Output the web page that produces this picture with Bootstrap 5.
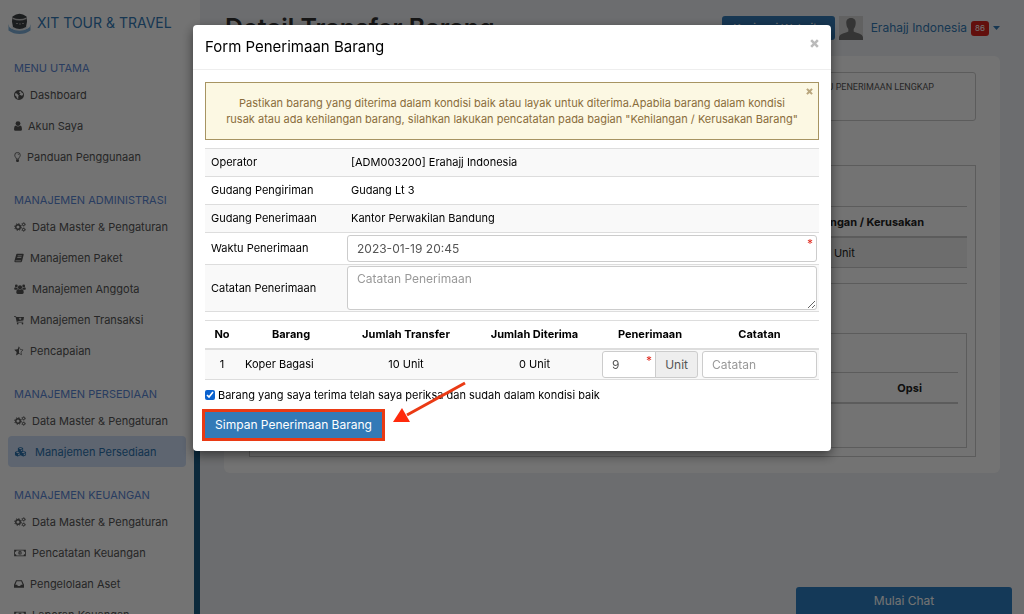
<!DOCTYPE html>
<html lang="id">
<head>
<meta charset="utf-8">
<meta name="viewport" content="width=device-width, initial-scale=1">
<title>Detail Transfer Barang</title>
<link href="https://cdn.jsdelivr.net/npm/bootstrap@5.3.0/dist/css/bootstrap.min.css" rel="stylesheet">
<style>
  body { font-family: Inter, "Open Sans", sans-serif; font-size: 11px; line-height: 16px; color: #333; background: #f0f2f5; height: 100vh; overflow: hidden; }
  a { text-decoration: none; }
  .side { width: 200px; background: #fff; }
  .side-menu { padding: 0 14px; }
  .side-track { width: 6px; padding-top: 200px; }
  .side-thumb { background: #1b5c84; }
  .brand { gap: 6px; height: 46px; margin: 0 -6px 12px; color: #337ab7; font-size: 14px; }
  .side h2 { font-size: 11px; line-height: 21px; margin: 0; color: #5b87d6; font-weight: 400; white-space: nowrap; }
  .side ul { margin: 0 -6px 18px; }
  .side .item { height: 31px; padding: 0 6px; gap: 6px; color: #555; white-space: nowrap; border-radius: 4px; }
  .side .item.active { background: #d0dff8; color: #2a72ae; gap: 8px; }
  .side svg.ic { height: 10px; fill: currentColor; flex: none; }
  .main-top { padding: 16px 24px 0 25px; height: 56px; }
  .main-top h1 { font-size: 25px; line-height: 24px; font-weight: 600; margin: 0; color: #333; }
  .btn-page { background: #337ab7; color: #fff; font-size: 11px; line-height: 14px; padding: 5px 8px; border: 0; border-radius: 3px; width: 113px; white-space: nowrap; }
  .user { font-size: 12px; color: #337ab7; }
  .count { background: #d9231c; color: #fff; font-size: 8px; line-height: 15px; padding: 0 4px; border-radius: 3px; }
  .panel-main { background: #fff; margin: 0 24px; padding: 16px 24px 16px 25px; border-radius: 6px; }
  .info-box { border: 1px solid #ccc; border-radius: 3px; height: 49px; padding: 6px 41px; font-family: Roboto, sans-serif; font-size: 9px; text-align: right; color: #555; }
  .outer-box { border: 1px solid #ccc; margin-top: 44px; padding: 40px 8px 8px; }
  .outer-box table { margin: 0 0 15px; color: #222; }
  .outer-box th, .outer-box td { font-size: 11px; line-height: 16px; padding: 7px 6px 6px; text-align: center; border-color: #ccc; white-space: nowrap; }
  .outer-box thead th { border-top: 1px solid #ccc; border-bottom: 2px solid #ccc; }
  .outer-box tbody td { background: #f1f1f1; box-shadow: none; }
  .end-line { border-top: 1px solid #ccc; margin-bottom: 49px; }
  .inner-box { border: 1px solid #ccc; padding: 38px 8px 28px; }
  .chat { position: fixed; right: 12px; bottom: 0; width: 216px; height: 27px; background: #2d7fc3; color: #fff; border: 0; border-radius: 3px 3px 0 0; font-size: 12px; }
  .modal-backdrop.show { opacity: .55; }
  .modal { --bs-modal-width: 638px; }
  .modal-dialog { margin: 25px auto; color: #000; }
  .modal-content { border: 0; border-radius: 4px; color: #000; box-shadow: 0 4px 12px rgba(0,0,0,.5); }
  .modal-header { padding: 0 12px; height: 45px; border-bottom: 1px solid #eee; }
  .modal-title { font-size: 15px; line-height: 20px; font-weight: 400; }
  .modal-body { padding: 12px 12px 13px; }
  .x { border: 0; background: none; padding: 0; line-height: 0; }
  .warn { border: 1px solid #a79462; background: #fcf8e3; color: #8a6d3b; margin: 0 0 8px; padding: 12px 12px; border-radius: 0; text-align: center; line-height: 16px; height: 58px; }
  .warn .x { position: absolute; right: 5px; top: 5px; }
  .grid-form { margin-bottom: 8px; --bs-table-striped-bg: #f9f9f9; --bs-table-striped-color: #000; border-bottom: 1px solid #ddd; }
  .grid-form > tbody > tr > * { font-size: 11px; line-height: 16px; padding: 5px 6px 6px; border-width: 1px 0 0; border-color: #ddd; color: #000; font-weight: 400; vertical-align: middle; }
  .grid-form > tbody > tr > .field { padding: 1px 2px; position: relative; }
  .grid-form > tbody > tr > .field-roomy { padding: 2px; }
  .grid-form > thead th { font-size: 11px; line-height: 16px; padding: 5px 6px 6px; border-top: 1px solid #ddd; border-bottom: 2px solid #ddd; color: #000; text-align: center; font-weight: 700; }
  .items-table { margin-bottom: 7px; }
  .field .form-control, .field .input-group-text { font-size: 12px; line-height: 16px; height: 27px; padding: 4px 9px; border-color: #ccc; border-radius: 3px; color: #555; }
  .field .form-control::placeholder { color: #999; }
  .field textarea.form-control { height: 44px; display: block; resize: vertical; }
  .field .input-group-text { background: #eee; border-radius: 0 3px 3px 0; }
  .field .input-group .form-control { border-radius: 3px 0 0 3px; }
  .req { position: absolute; right: 6px; top: 4px; color: #e02b20; font-size: 12px; line-height: 14px; z-index: 6; }
  .req-in { right: 48px; }
  .agree { gap: 3px; margin-bottom: 9px; }
  .agree input { width: 10px; height: 10px; margin: 0; accent-color: #0b62cf; }
  .save { background: #337ab7; color: #fff; font-size: 12px; line-height: 16px; border: 0; border-radius: 0; padding: 5px 9px; width: 177px; height: 26px; outline: 3px solid #ea3a14; white-space: nowrap; }
  .save:hover { background: #286090; color: #fff; }
  .arrow { position: absolute; left: 188px; bottom: 13px; z-index: 2; }
</style>
</head>
<body class="d-flex">
<svg class="d-none">
  <symbol id="globe" viewBox="0 0 12 12"><path fill-rule="evenodd" d="M6 0a6 6 0 1 0 0 12A6 6 0 0 0 6 0M7 1.3l1.500.6.7 1.300 1.300.4.3 2.400-1.500 1-1.200-.8L6.500 5.600 7.800 4 6.200 3.200zM1.500 4l2 .2 2.300 2.600-.8 1.400.2 2.500L3.500 10 2.900 7.700 1.200 6.200z"/></symbol>
  <symbol id="user" viewBox="0 0 10 12"><circle cx="5" cy="3" r="3"/><path d="M2.200 5.500Q0 6 0 10q0 2 1.800 2h6.400Q10 12 10 10 10 6 7.800 5.500 5 7.800 2.200 5.500z"/></symbol>
  <symbol id="bulb" viewBox="0 0 8 12"><path fill="none" stroke="currentColor" d="M2.700 8.500C2.700 6.800.7 6 .7 3.800a3.300 3.300 0 0 1 6.600 0C7.300 6 5.300 6.800 5.300 8.500z"/><path d="M2.300 9h3.400v2L4.800 12H3.200l-.9-1z"/><path fill="none" stroke="currentColor" stroke-width=".7" d="M4 2.200q1.500 0 1.500 1.300"/></symbol>
  <symbol id="cogs" viewBox="0 0 14 12"><g fill="none" stroke="currentColor"><circle cx="4.600" cy="6" r="2.700" stroke-width="1.700"/><circle cx="4.600" cy="6" r="4" stroke-width="1.200" stroke-dasharray="1.570 1.570"/><circle cx="11.300" cy="2.900" r="1.400" stroke-width="1.200"/><circle cx="11.300" cy="9.100" r="1.400" stroke-width="1.200"/><circle cx="11.300" cy="2.900" r="2.200" stroke-width=".7" stroke-dasharray="1.150 1.150"/><circle cx="11.300" cy="9.100" r="2.200" stroke-width=".7" stroke-dasharray="1.150 1.150"/></g></symbol>
  <symbol id="book" viewBox="0 0 12 12"><path fill-rule="evenodd" d="M3.600 1h7.200q1 0 .8 1L9.600 10q-.3 1-1.200 1H1.800Q.3 11 .5 9.500L2.600 2q.3-1 1-1M4.500 3l-.2.900h4.900l.2-.9zM4 5l-.2.900h4.900l.2-.9zM1.900 9.100q-.4.900.4.900h5.800l.3-.9z"/></symbol>
  <symbol id="group" viewBox="0 0 14 12"><circle cx="7" cy="4" r="2.500"/><circle cx="2.600" cy="2.300" r="1.700"/><circle cx="11.400" cy="2.300" r="1.700"/><path d="M4.700 6Q2.500 6.500 2.500 10q0 2 1.700 2h5.600q1.700 0 1.700-2 0-3.500-2.200-4Q7 8 4.700 6zM1.200 4Q0 4.300 0 6q0 1 1 1h1.900Q3.500 6 4.200 5.700L3.900 4.200Q2.500 5 1.200 4zM12.800 4Q14 4.300 14 6q0 1-1 1h-1.900Q10.500 6 9.800 5.700l.3-1.500Q11.500 5 12.800 4z"/></symbol>
  <symbol id="cart" viewBox="0 0 13 12"><path fill-rule="evenodd" d="M0 1h2.600l.4 1H13l-.8 4.700-7.900.8.3.8H12v1H3.700L2 2H0zM7.300 3v1.200H6L8 6l2-1.800H8.700V3z"/><circle cx="4.800" cy="10.700" r="1.100"/><circle cx="11" cy="10.700" r="1.100"/></symbol>
  <symbol id="star" viewBox="0 0 12 12"><path d="M6 .3V9.200L2.500 11.300 3.200 7.300.2 4.500l4.100-.6z"/><path fill="none" stroke="currentColor" stroke-width=".8" d="M6 1l1.500 3.200 3.400.5-2.500 2.400.6 3.400-3-1.600"/></symbol>
  <symbol id="cubes" viewBox="0 0 15 13"><path fill-rule="evenodd" d="M7.500 0l3.400 1.300v3.500L14.700 6.400v4.200L11.200 12.500 7.500 10.700 3.800 12.500.3 10.600V6.400l3.800-1.600V1.300zM5.200 2l2.300.9L9.800 2 7.500 1.100zM8 5.500l2-.9V3L8 3.800zM1.600 7l2.300 1 2.300-1-2.300-1zM4.400 11l2.200-1.100V8L4.400 9zM8.900 7l2.300 1 2.300-1-2.300-1zM11.700 11l2.100-1.100V8l-2.100 1z"/></symbol>
  <symbol id="money" viewBox="0 0 14 12"><path fill-rule="evenodd" d="M0 2h14v8H0zM2.800 3Q2.500 4.500 1 4.700v2.600Q2.500 7.500 2.800 9h8.400Q11.500 7.500 13 7.300V4.700Q11.500 4.500 11.200 3z"/><path fill-rule="evenodd" d="M7 3.400a2 2.600 0 1 0 0 5.200 2 2.600 0 1 0 0-5.200M6.300 4.800l.6-.5h.6v2.800h.6v.6H6v-.6h.7V5.300z"/></symbol>
  <symbol id="inbox" viewBox="0 0 12 12"><path fill-rule="evenodd" d="M2.500 1.500h7L12 7v3.500H0V7zM3.300 2.800L1.600 7h2.200l.8 1.500h2.800L8.200 7h2.200L8.700 2.800z"/></symbol>
  <symbol id="times" viewBox="0 0 10 10"><path d="M2.300.3L5 3 7.700.3l2 2L7 5l2.700 2.700-2 2L5 7 2.300 9.700l-2-2L3 5 .3 2.300z"/></symbol>
</svg>

<aside class="side d-flex flex-shrink-0 overflow-hidden">
  <nav class="side-menu flex-fill" aria-label="Menu">
    <a class="brand d-flex align-items-center text-nowrap" href="#">
      <svg width="23" height="23" viewBox="0 0 23 23" aria-hidden="true"><path d="M.5 12q0 6 11 6t11-6v6.500q-5 3.500-11 3.500T.5 18.500z" fill="#7fb0da"/><path d="M3.500 14q8 5 16 0v2.500q-8 4.500-16 0z" fill="#e4e8ec"/><path d="M4.500 4.500Q11.500-1 18.500 4.500l.5 5-1 5.500q-6.500 4-13 0l-1-5.500z" fill="#3d4043"/><path d="M4.500 5.500q7 3 14 0v1.500q-7 3-14 0z" fill="#c8c8c8"/><path d="M8 11.500h2m1 .5h2m1-.5h2" stroke="#999"/></svg>
      <span>XIT TOUR &amp; TRAVEL</span></a>
    <h2>MENU UTAMA</h2>
    <ul class="list-unstyled">
      <li><a class="item d-flex align-items-center" href="#"><svg class="ic" width="10"><use href="#globe"/></svg>Dashboard</a></li>
      <li><a class="item d-flex align-items-center" href="#"><svg class="ic" width="8"><use href="#user"/></svg>Akun Saya</a></li>
      <li><a class="item d-flex align-items-center" href="#"><svg class="ic" width="7"><use href="#bulb"/></svg>Panduan Penggunaan</a></li>
    </ul>
    <h2>MANAJEMEN ADMINISTRASI</h2>
    <ul class="list-unstyled">
      <li><a class="item d-flex align-items-center" href="#"><svg class="ic" width="12"><use href="#cogs"/></svg>Data Master &amp; Pengaturan</a></li>
      <li><a class="item d-flex align-items-center" href="#"><svg class="ic" width="10"><use href="#book"/></svg>Manajemen Paket</a></li>
      <li><a class="item d-flex align-items-center" href="#"><svg class="ic" width="12"><use href="#group"/></svg>Manajemen Anggota</a></li>
      <li><a class="item d-flex align-items-center" href="#"><svg class="ic" width="10"><use href="#cart"/></svg>Manajemen Transaksi</a></li>
      <li><a class="item d-flex align-items-center" href="#"><svg class="ic" width="10"><use href="#star"/></svg>Pencapaian</a></li>
    </ul>
    <h2>MANAJEMEN PERSEDIAAN</h2>
    <ul class="list-unstyled">
      <li><a class="item d-flex align-items-center" href="#"><svg class="ic" width="12"><use href="#cogs"/></svg>Data Master &amp; Pengaturan</a></li>
      <li><a class="item active d-flex align-items-center" href="#" aria-current="page"><svg class="ic" width="13"><use href="#cubes"/></svg>Manajemen Persediaan</a></li>
    </ul>
    <h2>MANAJEMEN KEUANGAN</h2>
    <ul class="list-unstyled">
      <li><a class="item d-flex align-items-center" href="#"><svg class="ic" width="12"><use href="#cogs"/></svg>Data Master &amp; Pengaturan</a></li>
      <li><a class="item d-flex align-items-center" href="#"><svg class="ic" width="12"><use href="#money"/></svg>Pencatatan Keuangan</a></li>
      <li><a class="item d-flex align-items-center" href="#"><svg class="ic" width="10"><use href="#inbox"/></svg>Pengelolaan Aset</a></li>
      <li><a class="item d-flex align-items-center" href="#"><svg class="ic" width="12"><use href="#money"/></svg>Laporan Keuangan</a></li>
    </ul>
  </nav>
  <div class="side-track d-flex"><div class="side-thumb flex-fill"></div></div>
</aside>

<main class="flex-fill overflow-hidden">
  <header class="main-top d-flex align-items-start">
    <h1 class="me-auto">Detail Transfer Barang</h1>
    <button class="btn-page" type="button">Kunjungi Website</button>
    <svg class="ms-1 me-2" width="24" height="24" viewBox="0 0 24 24" aria-hidden="true"><path fill="#d8d8d8" d="M0 0h24v24H0z"/><path fill="#777" d="M12 2c3.500 0 5 2.300 4.700 5.500-.1 2.500-1 4.500-2 5.500v2.500c2 1.500 9.300 2 9.300 6V24H0v-2.500c0-4 7.300-4.500 9.300-6V13c-1-1-1.900-3-2-5.500C7 4.300 8.500 2 12 2z"/></svg>
    <a class="user d-flex align-items-center gap-1 mt-1" href="#">Erahajj Indonesia <span class="count">86</span>
      <svg width="7" height="4" viewBox="0 0 7 4" aria-hidden="true"><path fill="#337ab7" d="M0 0h7L3.500 4z"/></svg></a>
  </header>
  <section class="panel-main">
    <div class="info-box">WAKTU PENERIMAAN LENGKAP</div>
    <div class="outer-box">
      <table class="table">
        <colgroup><col><col><col style="width:36%"></colgroup>
        <thead><tr><th>Barang</th><th>Jumlah</th><th>Jumlah Kehilangan / Kerusakan</th></tr></thead>
        <tbody><tr><td>Koper Bagasi</td><td>10 Unit</td><td>0 Unit</td></tr></tbody>
      </table>
      <div class="end-line"></div>
      <div class="inner-box">
        <table class="table">
          <colgroup><col><col><col><col style="width:14%"></colgroup>
          <thead><tr><th>No</th><th>Operator</th><th>Waktu</th><th>Opsi</th></tr></thead>
        </table>
      </div>
    </div>
  </section>
  <button class="chat" type="button">Mulai Chat</button>
</main>

<div class="modal-backdrop show"></div>
<div class="modal d-block" role="dialog" aria-modal="true" aria-labelledby="formTitle">
  <div class="modal-dialog">
    <form class="modal-content">
      <div class="modal-header">
        <h4 class="modal-title" id="formTitle">Form Penerimaan Barang</h4>
        <button class="x mb-2" type="button" aria-label="Tutup"><svg width="9" height="9" fill="#bbb"><use href="#times"/></svg></button>
      </div>
      <div class="modal-body">
        <div class="alert warn" role="alert">Pastikan barang yang diterima dalam kondisi baik atau layak untuk diterima.Apabila barang dalam kondisi<br>rusak atau ada kehilangan barang, silahkan lakukan pencatatan pada bagian "Kehilangan / Kerusakan Barang"
          <button class="x" type="button" aria-label="Tutup peringatan"><svg width="7" height="7" fill="#b9a67d"><use href="#times"/></svg></button></div>
        <table class="table table-striped grid-form">
          <colgroup><col style="width:140px"><col></colgroup>
          <tbody>
            <tr><th scope="row">Operator</th><td>[ADM003200] Erahajj Indonesia</td></tr>
            <tr><th scope="row">Gudang Pengiriman</th><td>Gudang Lt 3</td></tr>
            <tr><th scope="row">Gudang Penerimaan</th><td>Kantor Perwakilan Bandung</td></tr>
            <tr><th scope="row"><label for="waktu">Waktu Penerimaan</label></th><td class="field field-roomy"><input class="form-control" id="waktu" type="text" value="2023-01-19 20:45"><span class="req">*</span></td></tr>
            <tr><th scope="row"><label for="catatan">Catatan Penerimaan</label></th><td class="field"><textarea class="form-control" id="catatan" placeholder="Catatan Penerimaan"></textarea></td></tr>
          </tbody>
        </table>
        <table class="table table-striped grid-form items-table text-center">
          <colgroup><col style="width:34px"><col style="width:104px"><col style="width:126px"><col style="width:131px"><col style="width:100px"><col></colgroup>
          <thead><tr><th>No</th><th>Barang</th><th>Jumlah Transfer</th><th>Jumlah Diterima</th><th>Penerimaan</th><th>Catatan</th></tr></thead>
          <tbody>
            <tr><td>1</td><td class="text-start">Koper Bagasi</td><td>10 Unit</td><td>0 Unit</td>
              <td class="field"><div class="input-group flex-nowrap"><input class="form-control" type="text" value="9" aria-label="Penerimaan"><span class="input-group-text">Unit</span></div><span class="req req-in">*</span></td>
              <td class="field"><input class="form-control" type="text" placeholder="Catatan" aria-label="Catatan"></td></tr>
          </tbody>
        </table>
        <div class="agree d-flex align-items-center"><input type="checkbox" id="setuju" checked><label for="setuju">Barang yang saya terima telah saya periksa dan sudah dalam kondisi baik</label></div>
        <div class="position-relative">
          <button class="save" type="submit">Simpan Penerimaan Barang</button>
          <svg class="arrow" width="74" height="44" viewBox="0 0 74 44" aria-hidden="true"><path d="M72 2L14 34" stroke="#ea3a14" stroke-width="3"/><path d="M0 41L9 27l8 14z" fill="#ff2a0c"/></svg>
        </div>
      </div>
    </form>
  </div>
</div>
<script src="https://cdn.jsdelivr.net/npm/bootstrap@5.3.0/dist/js/bootstrap.bundle.min.js"></script>
</body>
</html>
